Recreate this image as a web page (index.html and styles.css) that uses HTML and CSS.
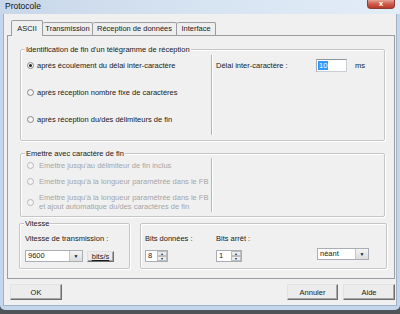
FILE: index.html
```html
<!DOCTYPE html>
<html lang="fr">
<head>
<meta charset="utf-8">
<title>Protocole</title>
<link rel="stylesheet" href="styles.css">
</head>
<body>
<div class="window">
  <div class="titlebar">
    <span class="title">Protocole</span>
    <div class="close">x</div>
  </div>
  <div class="client">
    <div class="tabs">
      <div class="tab active w1">ASCII</div>
      <div class="tab w2">Transmission</div>
      <div class="tab w3">Réception de données</div>
      <div class="tab w4">Interface</div>
    </div>
    <div class="panel">
      <div class="group g1">
        <div class="legend">Identification de fin d'un télégramme de réception</div>
        <div class="gbody b1">
          <div class="colleft c1">
            <div class="rrow"><span class="radio checked"></span>après écoulement du délai inter-caractère</div>
            <div class="rrow"><span class="radio"></span>après réception nombre fixe de caractères</div>
            <div class="rrow"><span class="radio"></span>après réception du/des délimiteurs de fin</div>
          </div>
          <div class="vsep s1"></div>
          <div class="colright">
            <span class="lbl-delai">Délai inter-caractère :</span>
            <span class="input"><span class="sel">10</span></span>
            <span class="ms">ms</span>
          </div>
        </div>
      </div>
      <div class="group g2">
        <div class="legend">Emettre avec caractère de fin</div>
        <div class="gbody b2">
          <div class="colleft c2">
            <div class="rrow dis"><span class="radio"></span>Emettre jusqu'au délimiteur de fin inclus</div>
            <div class="rrow dis"><span class="radio"></span>Emettre jusqu'à la longueur paramétrée dans le FB</div>
            <div class="rrow dis"><span class="radio"></span><span>Emettre jusqu'à la longueur paramétrée dans le FB<br>et ajout automatique du/des caractères de fin</span></div>
          </div>
          <div class="vsep s2"></div>
        </div>
      </div>
      <div class="bottomrow">
        <div class="group g3">
          <div class="legend">Vitesse</div>
          <div class="g3body">
            <div class="lbl">Vitesse de transmission :</div>
            <div class="ctrlrow">
              <span class="combo cb1"><span class="ctext">9600</span><span class="cbtn">&#9660;</span></span>
              <span class="btn small">bits/s</span>
            </div>
          </div>
        </div>
        <div class="group g4">
          <div class="col col1">
            <div class="lbl">Bits données :</div>
            <span class="spin sp1"><span class="ctext">8</span><span class="spbtns"><span class="sb">&#9652;</span><span class="sb">&#9662;</span></span></span>
          </div>
          <div class="col col2">
            <div class="lbl">Bits arrêt :</div>
            <span class="spin sp2"><span class="ctext">1</span><span class="spbtns"><span class="sb">&#9652;</span><span class="sb">&#9662;</span></span></span>
          </div>
          <span class="combo cb2"><span class="ctext">néant</span><span class="cbtn">&#9660;</span></span>
        </div>
      </div>
    </div>
    <div class="buttons">
      <span class="btn big ok">OK</span>
      <span class="btn big annuler">Annuler</span>
      <span class="btn big aide">Aide</span>
    </div>
  </div>
</div>
</body>
</html>
```
FILE: styles.css
```css
* { box-sizing: border-box; }
html, body { margin: 0; padding: 0; }
body {
  width: 400px;
  height: 314px;
  background: #4f5458;
  font-family: "Liberation Sans", Arial, sans-serif;
  font-size: 7.5px;
  color: #1a1a1a;
  overflow: hidden;
}
.window {
  width: 400px;
  height: 310px;
  background: #c3d6ec;
  border-radius: 0 0 5px 5px;
  display: flex;
  flex-direction: column;
}
.titlebar {
  height: 14px;
  display: flex;
  align-items: flex-start;
  background: linear-gradient(to right, #c8d7e9, #d6e3f1 50%, #e3edf8);
}
.title {
  margin: 2px 0 0 5px;
  font-size: 8.5px;
  line-height: 9px;
  color: #111;
}
.close {
  margin-left: auto;
  margin-right: 5px;
  width: 28px;
  height: 9px;
  border: 1px solid #8e3b33;
  border-top: none;
  border-radius: 0 0 4px 4px;
  background: linear-gradient(#e6a195, #cf5c4c 50%, #b8392a);
  color: #fff;
  font-weight: bold;
  font-size: 8px;
  line-height: 7px;
  text-align: center;
}
.client {
  flex: 1;
  margin: 0 3px 4px 3px;
  background: #f0f0f0;
  border: 1px solid #9fb1c4;
  border-top: none;
  display: flex;
  flex-direction: column;
}
.tabs {
  display: flex;
  align-items: flex-end;
  margin: 6px 0 0 7px;
  height: 15px;
}
.tab {
  height: 13px;
  border: 1px solid #9a9ca2;
  border-bottom: none;
  border-left: none;
  border-radius: 2px 2px 0 0;
  text-align: center;
  line-height: 12px;
  background: #eeeeee;
}
.tab.active {
  height: 16px;
  border-left: 1px solid #9a9ca2;
  background: #f0f0f0;
  position: relative;
  z-index: 1;
  margin-bottom: -1px;
  line-height: 15px;
}
.w1 { width: 32px; }
.w2 { width: 50px; }
.w3 { width: 84px; }
.w4 { width: 39px; }
.panel {
  margin: 0 1px 0 3px;
  height: 244px;
  border: 1px solid #9a9ca2;
  display: flex;
  flex-direction: column;
}
.group {
  border: 1px solid #c6c6c6;
  box-shadow: inset 1px 1px 0 #fff, 1px 1px 0 #fff;
  border-radius: 2px;
}
.legend {
  width: fit-content;
  margin: -5px 0 0 4px;
  padding: 0 1px;
  line-height: 9px;
  background: #f0f0f0;
}
.g1 { margin: 13px 0 0 12px; width: 365px; height: 92px; }
.g2 { margin: 12px 0 0 12px; width: 365px; height: 64px; }
.gbody { display: flex; }
.b1 { height: 85px; }
.b2 { height: 57px; }
.colleft { width: 190px; padding-left: 6px; display: flex; flex-direction: column; }
.c1 { padding-top: 4px; gap: 13px; }
.c2 { padding-top: 3px; gap: 7px; }
.rrow { display: flex; align-items: center; min-height: 14px; line-height: 9px; }
.c2 .rrow { min-height: 9px; }
.radio {
  width: 7px;
  height: 7px;
  border-radius: 50%;
  border: 1px solid #8a8a8a;
  background: #f4f4f4;
  margin-right: 3px;
  flex: none;
  display: flex;
  align-items: center;
  justify-content: center;
}
.radio.checked::after {
  content: "";
  width: 3px;
  height: 3px;
  border-radius: 50%;
  background: #222;
}
.dis { color: #a6a6a6; }
.dis .radio { border-color: #b8b8b8; margin-right: 5px; }
.vsep {
  width: 2px;
  border-left: 1px solid #b5b5b5;
  border-right: 1px solid #fff;
}
.s1 { margin: 1px 0 4px 0; }
.s2 { margin: 0 0 3px 0; }
.colright {
  padding: 4px 0 0 3px;
  display: flex;
  align-items: center;
  height: 18px;
  margin-top: 0;
  align-self: flex-start;
}
.lbl-delai { width: 100px; }
.input {
  width: 31px;
  height: 13px;
  background: #fff;
  border: 1px solid #c9ced6;
  border-top-color: #8f939b;
  border-left-color: #a9adb4;
  display: flex;
  align-items: center;
  padding-left: 1px;
}
.sel { background: #3399ff; color: #fff; padding: 0 1px; line-height: 9px; }
.ms { margin-left: 8px; }
.bottomrow { display: flex; margin: 6px 0 0 11px; }
.g3 { width: 111px; height: 46px; }
.g3body { padding-left: 5px; }
.lbl { line-height: 9px; }
.g3body .lbl { margin-top: 6px; }
.ctrlrow { display: flex; align-items: center; margin-top: 7px; }
.combo {
  height: 12px;
  background: #fff;
  border: 1px solid #a9adb4;
  display: flex;
  align-items: stretch;
  justify-content: space-between;
}
.ctext { padding-left: 2px; line-height: 10px; }
.cbtn {
  width: 13px;
  background: linear-gradient(#f4f4f4, #dcdcdc);
  border-left: 1px solid #c4c4c4;
  font-size: 5px;
  line-height: 10px;
  text-align: center;
  color: #111;
}
.cb1 { width: 58px; }
.cb2 { width: 52px; align-self: flex-start; margin-top: 24px; }
.btn {
  display: flex;
  align-items: center;
  justify-content: center;
  background: #ececec;
  border: 1px solid;
  border-color: #e2e2e2 #6e6e6e #6e6e6e #e2e2e2;
  box-shadow: inset -1px -1px 0 #a8a8a8;
}
.small { width: 27px; height: 11px; margin-left: 4px; text-decoration: underline; line-height: 9px; }
.g4 { width: 247px; height: 46px; margin-left: 10px; display: flex; padding-left: 4px; }
.col { padding-top: 10px; }
.col .lbl { margin-bottom: 7px; }
.col1 { width: 71px; }
.col2 { width: 101px; }
.spin {
  height: 12px;
  background: #fff;
  border: 1px solid #a9adb4;
  display: flex;
  justify-content: space-between;
}
.sp1 { width: 23px; }
.sp2 { width: 26px; }
.spbtns { width: 10px; display: flex; flex-direction: column; }
.sb {
  flex: 1;
  background: #ececec;
  border: 1px solid #bdbdbd;
  font-size: 4px;
  line-height: 3px;
  text-align: center;
  color: #222;
}
.buttons { display: flex; margin-top: 5px; }
.big { height: 16px; width: 52px; }
.ok { margin-left: 6px; }
.annuler { margin-left: auto; width: 51px; }
.aide { margin-left: 5px; margin-right: 1px; }
```
